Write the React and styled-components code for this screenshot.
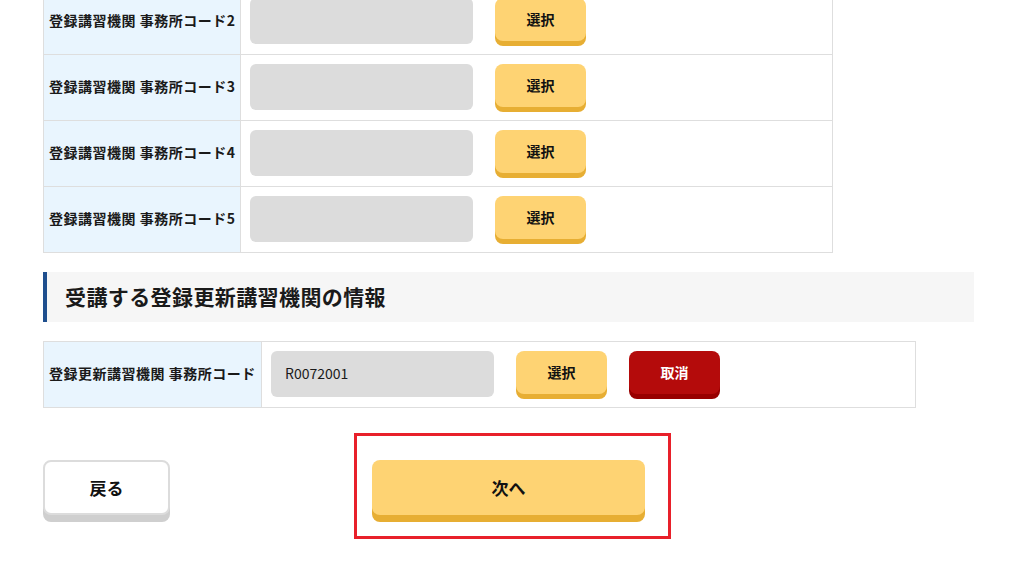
import React from 'react';
import styled, { createGlobalStyle } from 'styled-components';

const GlobalStyle = createGlobalStyle`
  body {
    margin: 0;
    background: #fff;
    font-family: "Noto Sans CJK JP", "Noto Sans", sans-serif;
    color: #1a1a1a;
  }
`;

// page is scrolled a little, the first visible row starts above the fold
const Page = styled.div`
  margin-top: -12px;
  padding: 0 0 40px 43px;
  width: 931px;
`;

const FormTable = styled.table`
  width: ${p => p.$width}px;
  border-collapse: collapse;
  border: 1px solid #dedede;
  table-layout: fixed;
`;

const Row = styled.tr`
  height: 66px;
`;

const Label = styled.th`
  width: ${p => p.$width}px;
  box-sizing: border-box;
  background: #e9f5fe;
  border: 1px solid #dedede;
  padding: 0 0 3px 5px;
  text-align: left;
  font-size: 14px;
  font-weight: 700;
  letter-spacing: 0.5px;
  white-space: nowrap;
  overflow: hidden;
  color: #1a1a1a;
`;

const Cell = styled.td`
  border: 1px solid #dedede;
  padding: 0 9px;
`;

const Controls = styled.div`
  display: flex;
  align-items: center;
  gap: 22px;
`;

const CodeBox = styled.div`
  width: 223px;
  height: 46px;
  border-radius: 6px;
  background: #dcdcdc;
  display: flex;
  align-items: center;
  padding: 0 14px 2px;
  box-sizing: border-box;
  font-size: 14px;
  color: #1a1a1a;
  margin-top: -1px;
`;

const SmallButton = styled.button`
  width: 91px;
  height: 43px;
  margin-bottom: 4px;
  padding-bottom: 2px;
  border: none;
  border-radius: 8px;
  font-family: inherit;
  font-size: 14px;
  font-weight: 700;
  cursor: pointer;
  background: ${p => (p.$danger ? '#b40b0b' : '#fed373')};
  color: ${p => (p.$danger ? '#fff' : '#111')};
  box-shadow: 0 5px 0 ${p => (p.$danger ? '#980000' : '#e7ae33')};
`;

const SectionTitle = styled.h2`
  margin: 19px 0 19px;
  height: 50px;
  display: flex;
  align-items: center;
  box-sizing: border-box;
  padding: 0 0 3px 18px;
  border-left: 4px solid #1f4f8e;
  background: #f6f6f6;
  font-size: 21px;
  font-weight: 700;
  letter-spacing: 0.4px;
  color: #1a1a1a;
`;

const Footer = styled.div`
  margin-top: 25px;
  display: flex;
  align-items: flex-start;
  gap: 184px;
`;

const BackButton = styled.button`
  margin-top: 27px;
  width: 127px;
  height: 55px;
  border: 2px solid #dcdcdc;
  border-radius: 8px;
  background: #fff;
  box-shadow: 0 7px 0 #cfcfcf;
  font-family: inherit;
  font-size: 17px;
  font-weight: 700;
  color: #111;
  cursor: pointer;
`;

const Highlight = styled.div`
  border: 3px solid #e8202a;
  padding: 24px 23px 14px 15px;
`;

const NextButton = styled.button`
  display: block;
  width: 273px;
  height: 55px;
  margin-bottom: 7px;
  border: none;
  border-radius: 8px;
  background: #fed373;
  box-shadow: 0 7px 0 #e7ae33;
  font-family: inherit;
  font-size: 17px;
  font-weight: 700;
  color: #111;
  cursor: pointer;
`;

const officeCodes = [2, 3, 4, 5];

const App = () => {
  return (
    <>
      <GlobalStyle />
      <Page>
        <FormTable $width={790}>
          <tbody>
            {officeCodes.map(n => (
              <Row key={n}>
                <Label $width={197}>登録講習機関 事務所コード{n}</Label>
                <Cell>
                  <Controls>
                    <CodeBox />
                    <SmallButton>選択</SmallButton>
                  </Controls>
                </Cell>
              </Row>
            ))}
          </tbody>
        </FormTable>

        <SectionTitle>受講する登録更新講習機関の情報</SectionTitle>

        <FormTable $width={873}>
          <tbody>
            <Row>
              <Label $width={218}>登録更新講習機関 事務所コード</Label>
              <Cell>
                <Controls>
                  <CodeBox>R0072001</CodeBox>
                  <SmallButton>選択</SmallButton>
                  <SmallButton $danger>取消</SmallButton>
                </Controls>
              </Cell>
            </Row>
          </tbody>
        </FormTable>

        <Footer>
          <BackButton>戻る</BackButton>
          <Highlight>
            <NextButton>次へ</NextButton>
          </Highlight>
        </Footer>
      </Page>
    </>
  );
};

export default App;
